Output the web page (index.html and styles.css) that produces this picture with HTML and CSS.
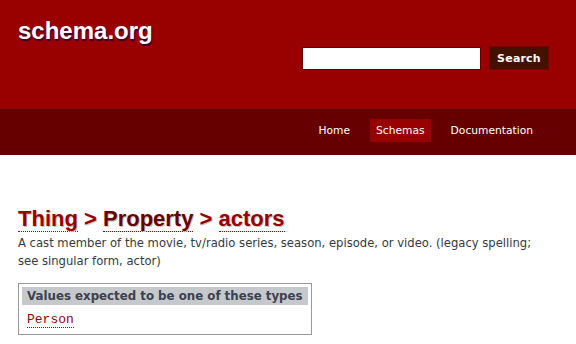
FILE: index.html
```html
<!DOCTYPE html>
<html lang="en">
<head>
  <meta charset="UTF-8">
  <title>actors - schema.org</title>
  <link rel="stylesheet" href="styles.css">
</head>
<body>
  <div id="container">
    <div id="headerwrap">
      <div id="pagehead">
        <a class="logo" href="/">schema.org</a>
        <form class="search" action="/docs/search_results.html">
          <input type="text" name="q" class="search-box">
          <button type="submit" class="search-btn">Search</button>
        </form>
      </div>
      <div id="selectionbar">
        <ul>
          <li><a href="/">Home</a></li>
          <li class="activelink"><a href="/docs/schemas.html">Schemas</a></li>
          <li><a href="/docs/documents.html">Documentation</a></li>
        </ul>
      </div>
    </div>

    <div id="mainContent">
      <h1 class="page-title">
        <a href="/Thing" class="core">Thing</a> &gt;
        <a href="/Property" class="prop">Property</a> &gt;
        <a href="/actors" class="core">actors</a>
      </h1>
      <div class="description">A cast member of the movie, tv/radio series, season, episode, or video. (legacy spelling; see singular form, actor)</div>

      <table class="definition-table">
        <thead>
          <tr><th>Values expected to be one of these types</th></tr>
        </thead>
        <tbody>
          <tr><td><code><a href="/Person">Person</a></code></td></tr>
        </tbody>
      </table>
    </div>
  </div>
</body>
</html>
```

FILE: styles.css
```css
* { margin: 0; padding: 0; box-sizing: border-box; }
body {
  font-family: "DejaVu Sans", Verdana, sans-serif;
  font-size: 11.6px;
  color: #363a40;
  background: #fff;
}
a { text-decoration: none; }

/* ===== header ===== */
#pagehead {
  background: #990000;
  height: 109px;
  display: flex;
  justify-content: space-between;
  align-items: flex-start;
  padding: 0 27px 0 18px;
}
.logo {
  font-family: "Liberation Sans", Arial, sans-serif;
  font-weight: bold;
  font-size: 24px;
  color: #fff;
  text-shadow: 1px 2px 1px #330033;
  margin-top: 17px;
}
.search {
  display: flex;
  gap: 8px;
  margin-top: 46px;
}
.search-box {
  width: 179px;
  height: 23px;
  margin-top: 1px;
  border: 1px solid #660000;
  background: #fff;
}
.search-btn {
  width: 60px;
  height: 24px;
  background: #441100;
  border: 1px solid #770000;
  color: #fff;
  font-family: "DejaVu Sans", Verdana, sans-serif;
  font-weight: bold;
  font-size: 11px;
  letter-spacing: 0.2px;
}

#selectionbar {
  background: #660000;
  height: 46px;
  display: flex;
  justify-content: flex-end;
  align-items: center;
  padding: 0 37px 3px 0;
}
#selectionbar ul {
  list-style: none;
  display: flex;
  gap: 14px;
}
#selectionbar a {
  display: block;
  padding: 0 6px;
  line-height: 23px;
  color: #fff;
  font-size: 10.7px;
}
#selectionbar .activelink a { background: #990000; }

/* ===== content ===== */
#mainContent { padding: 50px 30px 0 18px; }
.page-title {
  font-family: "Liberation Sans", Arial, sans-serif;
  font-size: 22px;
  font-weight: bold;
  color: #990000;
  line-height: 28px;
  text-shadow: 1px 1px 1px #bbb;
}
.page-title a {
  color: #990000;
  border-bottom: 1px dotted #990000;
}
.page-title a.prop { color: #660000; }
.description {
  line-height: 18px;
  margin-top: 1px;
}
.definition-table {
  margin-top: 13px;
  border: 1px solid #999;
  border-spacing: 3px;
}
.definition-table th {
  background: #c6c9cc;
  color: #3c4150;
  font-weight: bold;
  font-size: 11.8px;
  text-align: left;
  padding: 0 5px;
  line-height: 18px;
  white-space: nowrap;
}
.definition-table td { padding: 4px 5px 4px; }
.definition-table code {
  font-family: "Liberation Mono", "Courier New", monospace;
  font-size: 13px;
}
.definition-table code a {
  color: #990000;
  border-bottom: 1px dotted #990000;
}
```
